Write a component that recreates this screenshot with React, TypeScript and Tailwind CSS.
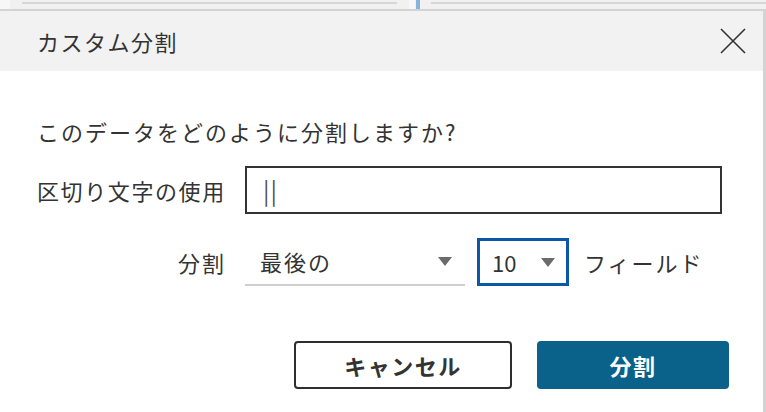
import React from "react";

const font = { fontFamily: '"Noto Sans CJK JP", "Noto Sans", sans-serif' };

function Caret() {
  return (
    <svg width="14" height="9" viewBox="0 0 14 9" className="shrink-0">
      <path d="M0 0 L14 0 L7 9 Z" fill="#6b6b6b" />
    </svg>
  );
}

export default function App() {
  return (
    <div
      className="w-[766px] h-[412px] bg-white overflow-hidden flex flex-col text-[#333]"
      style={font}
    >
      {/* top strip of the page behind the dialog */}
      <div className="h-[9px] bg-[#f1f1f1] flex items-start shrink-0">
        <div className="w-[10px] h-full bg-[#f7f7f7]" />
        <div className="ml-[12px] mt-[2px] w-[375px] h-[2px] bg-[#d6d6d6]" />
        <div className="ml-[12px] w-[6px] h-full bg-[#f8f8f8]" />
        <div className="ml-[1px] w-[4px] h-full bg-[#86b4de]" />
        <div className="ml-[11px] mt-[2px] flex-1 h-[2px] bg-[#d6d6d6]" />
      </div>

      {/* dialog */}
      <div className="flex-1 flex flex-col border-t-2 border-r-[3px] border-[#d3d3d3]">
        <div className="h-[60px] bg-[#f2f2f2] flex items-center justify-between pl-[37px] pr-[17px] shrink-0">
          <span className="text-[22px] tracking-[1.5px] leading-none">カスタム分割</span>
          <svg width="26" height="26" viewBox="0 0 26 26">
            <path d="M1 1 L25 25 M25 1 L1 25" stroke="#333" strokeWidth="1.6" fill="none" />
          </svg>
        </div>

        <div className="flex flex-col pl-[37px] pr-[41px] text-[22px] tracking-[2px]">
          <div className="mt-[45px] leading-[30px] whitespace-nowrap">このデータをどのように分割しますか?</div>

          <div className="mt-[20px] grid grid-cols-[189px_1fr] gap-x-[19px] items-center">
            <span className="leading-none whitespace-nowrap tracking-[1.6px]">区切り文字の使用</span>
            <div className="h-[48px] border-2 border-[#333] flex items-center pl-[16px] text-[#555] text-[24px] tracking-[1px]">
              ||
            </div>
          </div>

          <div className="mt-[24px] grid grid-cols-[189px_1fr] gap-x-[19px] items-center">
            <span className="leading-none text-right whitespace-nowrap">分割</span>
            <div className="flex items-center">
              <div className="w-[220px] h-[48px] border-b-2 border-[#cfcfcf] flex items-center justify-between pl-[15px] pr-[13px]">
                <span className="leading-none whitespace-nowrap">最後の</span>
                <Caret />
              </div>
              <div className="ml-[12px] w-[92px] h-[48px] border-[3px] border-[#0b58a6] flex items-center justify-between pl-[12px] pr-[11px]">
                <span className="leading-none tracking-[0px]">10</span>
                <Caret />
              </div>
              <span className="ml-[15px] leading-none whitespace-nowrap">フィールド</span>
            </div>
          </div>

          <div className="mt-[55px] -mr-[7px] flex justify-end gap-[25px]">
            <button className="w-[218px] h-[48px] border-2 border-[#2e2e2e] rounded-[4px] bg-white font-bold text-[22px] tracking-[1.5px] text-[#333]">
              キャンセル
            </button>
            <button className="w-[192px] h-[48px] rounded-[4px] bg-[#0a628a] font-bold text-[22px] tracking-[1.5px] text-white">
              分割
            </button>
          </div>
        </div>
      </div>
    </div>
  );
}
